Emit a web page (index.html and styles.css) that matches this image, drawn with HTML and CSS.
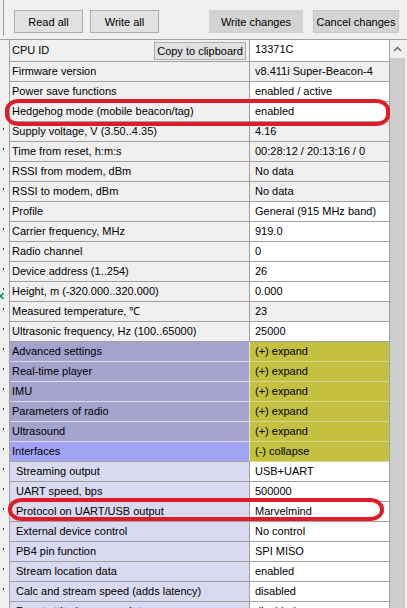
FILE: index.html
```html
<!DOCTYPE html>
<html lang="en">

<head>
    <meta charset="UTF-8">
    <meta name="viewport" content="width=device-width, initial-scale=1.0">
    <title>Modem settings</title>

    <link rel="stylesheet" href="styles.css">
</head>

<body>
    <div class="window">
        <div class="toolbar">
            <div class="edge"></div>
            <button class="btn" id="read-all">Read all</button>
            <button class="btn" id="write-all">Write all</button>
            <button class="btn dark" id="write-changes">Write changes</button>
            <button class="btn dark" id="cancel-changes">Cancel changes</button>
        </div>

        <div class="main">
            <div class="gutter">
                <span class="cell first"></span>
                <span class="cell"></span>
                <span class="cell"></span>
                <span class="cell"></span>
                <span class="cell dot"></span>
                <span class="cell dot"></span>
                <span class="cell dot"></span>
                <span class="cell dot"></span>
                <span class="cell dot"></span>
                <span class="cell dot"></span>
                <span class="cell dot"></span>
                <span class="cell dot"></span>
                <span class="cell dot"></span>
                <span class="cell dot"></span>
                <span class="cell dot"></span>
                <span class="cell dot"></span>
                <span class="cell dot"></span>
                <span class="cell dot"></span>
                <span class="cell dot"></span>
                <span class="cell dot"></span>
                <span class="cell dot"></span>
                <span class="cell dot"></span>
                <span class="cell dot"></span>
                <span class="cell dot"></span>
                <span class="cell dot"></span>
                <span class="cell dot"></span>
                <span class="cell dot"></span>
                <span class="cell dot"></span>
                <span class="cell dot"></span>
                <span class="close-mark">✕</span>
            </div>

            <div class="grid">
                <div class="row first">
                    <div class="label">CPU ID <button class="copy">Copy to clipboard</button></div>
                    <div class="value">13371C</div>
                </div>
                <div class="row">
                    <div class="label">Firmware version</div>
                    <div class="value ro">v8.411i Super-Beacon-4</div>
                </div>
                <div class="row">
                    <div class="label">Power save functions</div>
                    <div class="value">enabled / active</div>
                </div>
                <div class="row">
                    <div class="label">Hedgehog mode (mobile beacon/tag)</div>
                    <div class="value">enabled</div>
                </div>
                <div class="row">
                    <div class="label">Supply voltage, V (3.50..4.35)</div>
                    <div class="value ro">4.16</div>
                </div>
                <div class="row">
                    <div class="label">Time from reset, h:m:s</div>
                    <div class="value ro">00:28:12 / 20:13:16 / 0</div>
                </div>
                <div class="row">
                    <div class="label">RSSI from modem, dBm</div>
                    <div class="value ro">No data</div>
                </div>
                <div class="row">
                    <div class="label">RSSI to modem, dBm</div>
                    <div class="value ro">No data</div>
                </div>
                <div class="row">
                    <div class="label">Profile</div>
                    <div class="value">General (915 MHz band)</div>
                </div>
                <div class="row">
                    <div class="label">Carrier frequency, MHz</div>
                    <div class="value">919.0</div>
                </div>
                <div class="row">
                    <div class="label">Radio channel</div>
                    <div class="value">0</div>
                </div>
                <div class="row">
                    <div class="label">Device address (1..254)</div>
                    <div class="value">26</div>
                </div>
                <div class="row">
                    <div class="label">Height, m (-320.000..320.000)</div>
                    <div class="value">0.000</div>
                </div>
                <div class="row">
                    <div class="label">Measured temperature, &#8451;</div>
                    <div class="value ro">23</div>
                </div>
                <div class="row">
                    <div class="label">Ultrasonic frequency, Hz (100..65000)</div>
                    <div class="value">25000</div>
                </div>

                <!-- groups -->
                <div class="row section">
                    <div class="label">Advanced settings</div>
                    <div class="value">(+) expand</div>
                </div>
                <div class="row section">
                    <div class="label">Real-time player</div>
                    <div class="value">(+) expand</div>
                </div>
                <div class="row section">
                    <div class="label">IMU</div>
                    <div class="value">(+) expand</div>
                </div>
                <div class="row section">
                    <div class="label">Parameters of radio</div>
                    <div class="value">(+) expand</div>
                </div>
                <div class="row section">
                    <div class="label">Ultrasound</div>
                    <div class="value">(+) expand</div>
                </div>
                <div class="row section open">
                    <div class="label">Interfaces</div>
                    <div class="value">(-) collapse</div>
                </div>

                <div class="row sub">
                    <div class="label">Streaming output</div>
                    <div class="value">USB+UART</div>
                </div>
                <div class="row sub">
                    <div class="label">UART speed, bps</div>
                    <div class="value">500000</div>
                </div>
                <div class="row sub">
                    <div class="label">Protocol on UART/USB output</div>
                    <div class="value">Marvelmind</div>
                </div>
                <div class="row sub">
                    <div class="label">External device control</div>
                    <div class="value">No control</div>
                </div>
                <div class="row sub">
                    <div class="label">PB4 pin function</div>
                    <div class="value">SPI MISO</div>
                </div>
                <div class="row sub">
                    <div class="label">Stream location data</div>
                    <div class="value">enabled</div>
                </div>
                <div class="row sub">
                    <div class="label">Calc and stream speed (adds latency)</div>
                    <div class="value">disabled</div>
                </div>
                <div class="row sub">
                    <div class="label">Reset attitude on new data</div>
                    <div class="value">disabled</div>
                </div>
            </div>

            <div class="scroll">
                <div class="arrow">
                    <svg width="9" height="6" viewBox="0 0 9 6">
                        <polyline points="1,5 4.5,1.5 8,5" fill="none" stroke="#606060" stroke-width="1.3" />
                    </svg>
                </div>
            </div>
        </div>

        <!-- red hand-drawn marks -->
        <div class="mark mark-hedgehog"></div>
        <div class="mark mark-protocol"></div>
    </div>
</body>

</html>
```

FILE: styles.css
```css
body {
    margin: 0;
    background-color: #f0f0f0;
    font-family: "Liberation Sans", Arial, sans-serif;
    font-size: 11px;
    color: #000;
}

.window {
    position: relative;
    width: 407px;
    height: 608px;
    overflow: hidden;
}

.toolbar {
    display: flex;
    align-items: flex-start;
    height: 39px;
    border-bottom: 1px solid #a0a0a0;
}

.edge {
    width: 1px;
    height: 36px;
    margin-left: 3px;
    background-color: #9a9a9a;
}

.btn {
    height: 23px;
    margin-top: 10px;
    padding: 0;
    font-family: inherit;
    font-size: 11px;
    color: #000;
    background-color: #e1e1e1;
    border: 1px solid #adadad;
}

#read-all {
    width: 69px;
    margin-left: 10px;
}

#write-all {
    width: 69px;
    margin-left: 7px;
}

.btn.dark {
    background-color: #d4d4d4;
    border-color: #c6c6c6;
}

#write-changes {
    width: 94px;
    margin-left: 50px;
    border-color: #d4d4d4;
}

#cancel-changes {
    width: 86px;
    margin-left: 10px;
}

.main {
    display: flex;
}

.gutter {
    position: relative;
    display: flex;
    flex-direction: column;
    width: 9px;
}

.gutter .cell {
    display: block;
    height: 20px;
}

.gutter .cell.first {
    height: 22px;
}

.gutter .dot::before {
    content: "";
    display: block;
    width: 1px;
    height: 2px;
    margin: 6px 0 0 3px;
    background-color: #333;
}

.close-mark {
    position: absolute;
    left: -4px;
    top: 250px;
    font-size: 11px;
    font-weight: bold;
    color: #1f9a3c;
}

.grid {
    width: 379px;
    border-left: 1px solid #a0a0a0;
    border-right: 1px solid #a0a0a0;
}

.row {
    display: grid;
    grid-template-columns: 240px 139px;
    height: 20px;
}

.row.first {
    height: 22px;
}

.label,
.value {
    box-sizing: border-box;
    height: 100%;
    line-height: 19px;
    white-space: nowrap;
    overflow: hidden;
    border-bottom: 1px solid #a0a0a0;
}

.label {
    display: flex;
    justify-content: space-between;
    align-items: center;
    padding-left: 2px;
    background-color: #f0f0f0;
    border-right: 1px solid #a0a0a0;
}

.value {
    padding-left: 5px;
    background-color: #fff;
}

.value.ro {
    background-color: #f0f0f0;
}

.copy {
    width: 92px;
    height: 18px;
    margin-right: 3px;
    padding: 0;
    font-family: inherit;
    font-size: 11px;
    color: #000;
    background-color: #e1e1e1;
    border: 1px solid #adadad;
}

.row.section .label {
    background-color: #a3a3cd;
    border-bottom-color: #dcdcec;
    border-right-color: #e2e2e2;
}

.row.section .value {
    background-color: #c3c13f;
    border-bottom-color: #d8d78f;
}

.row.section.open .label {
    background-color: #a3a3f3;
    border-bottom-color: #a0a0a0;
}

.row.sub .label {
    padding-left: 6px;
    background-color: #d9d9ef;
}

.scroll {
    width: 15px;
    height: 568px;
    background-color: #cdcdcd;
}

.arrow {
    display: flex;
    justify-content: center;
    align-items: center;
    height: 18px;
    background-color: #f0f0f0;
}

.mark {
    position: absolute;
    border: 4px solid #e01c2b;
    border-radius: 14px / 11px;
}

.mark-hedgehog {
    left: 5px;
    top: 99px;
    width: 377px;
    height: 19px;
}

.mark-protocol {
    left: 8px;
    top: 498px;
    width: 368px;
    height: 15px;
}
```
